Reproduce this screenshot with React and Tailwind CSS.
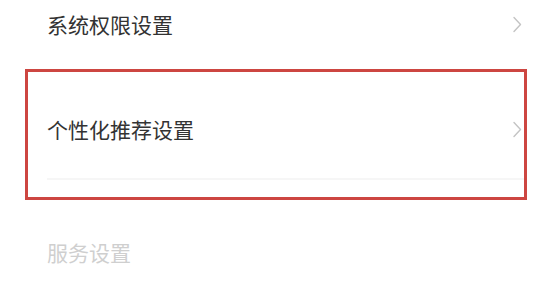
const Chevron = ({ className }) => (
  <svg width="10" height="17" viewBox="0 0 10 17" className={className} fill="none">
    <path d="M2 1.5 L8.5 8.5 L2 15.5" stroke="#c4c4c4" strokeWidth="1.4" strokeLinecap="round" strokeLinejoin="round" />
  </svg>
);

const App = () => {
  return (
    <div
      className="w-[550px] h-[283px] bg-white overflow-hidden"
      style={{ fontFamily: '"Noto Sans CJK SC", "Noto Sans", sans-serif' }}
    >
      <div className="h-[48px] flex items-center justify-between pl-[47px] pr-[28px]">
        <span className="text-[21px] leading-[22px] text-[#333333]">系统权限设置</span>
        <Chevron />
      </div>

      <div className="mt-[21px] ml-[25px] mr-[23px] h-[131px] border-[3px] border-[#cd4641]">
        <div className="pt-[46px] pl-[19px] pr-[2px] flex items-center justify-between">
          <span className="text-[21px] leading-[22px] text-[#333333]">个性化推荐设置</span>
          <Chevron />
        </div>
        <div className="mt-[38px] ml-[19px] h-[2px] bg-[#f6f6f6]" />
      </div>

      <div className="mt-[41px] pl-[47px]">
        <span className="text-[21px] leading-[22px] text-[#cfcfcf]">服务设置</span>
      </div>
    </div>
  );
};

export default App;
